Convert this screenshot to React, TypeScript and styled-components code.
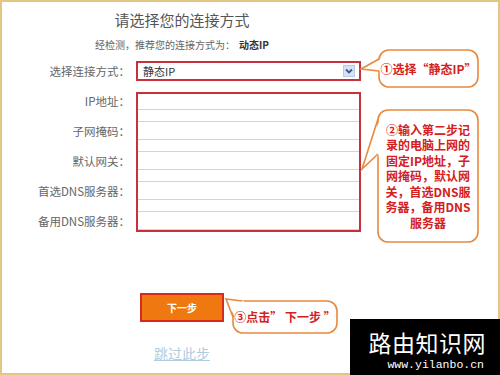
import React from 'react';
import styled, { createGlobalStyle } from 'styled-components';

const GlobalStyle = createGlobalStyle`
  html, body {
    margin: 0;
    padding: 0;
    background: #fff;
  }
  body {
    font-family: "Noto Sans CJK SC", "Noto Sans", sans-serif;
  }
`;

const Page = styled.div`
  position: relative;
  width: 500px;
  height: 375px;
  overflow: hidden;
`;

const Frame = styled.div`
  box-sizing: border-box;
  width: 500px;
  height: 375px;
  border: 2px solid #e4c585;
`;

const Content = styled.div`
  width: 360px;
  display: flex;
  flex-direction: column;
`;

const Title = styled.h1`
  margin: 8px 0 0;
  font-size: 15px;
  line-height: 20px;
  font-weight: normal;
  color: #555;
  text-align: center;
`;

const Hint = styled.p`
  margin: 8px 0 0;
  font-size: 10px;
  line-height: 14px;
  color: #666;
  text-align: center;

  b {
    color: #333;
    margin-left: 4px;
  }
`;

const SelectRow = styled.div`
  margin-top: 9px;
  display: flex;
  align-items: center;
  gap: 6px;
  height: 20px;
`;

const Label = styled.div<{ $h: number }>`
  width: 128px;
  font-size: 11.5px;
  line-height: ${p => p.$h}px;
  height: ${p => p.$h}px;
  color: #666;
  text-align: right;
  white-space: nowrap;
  flex: none;
`;

const Select = styled.div`
  position: relative;
  box-sizing: border-box;
  width: 225px;
  height: 20px;
  border: 2px solid #c8303a;
  padding-left: 5px;
  font-size: 11px;
  line-height: 16px;
  color: #333;
`;

const Arrow = styled.svg`
  position: absolute;
  right: 4px;
  top: 2px;
`;

const FieldsRow = styled.div`
  margin-top: 11px;
  display: flex;
  align-items: flex-start;
  gap: 6px;
  height: 140px;
`;

const Labels = styled.div`
  display: flex;
  flex-direction: column;
  margin-top: -6px;
  height: 140px;
`;

const Group = styled.div`
  width: 221px;
  height: 136px;
  border: 2px solid #c8303a;
  overflow: hidden;
  display: flex;
  flex-direction: column;
  gap: 11px;
`;

const Input = styled.div<{ $first?: boolean }>`
  box-sizing: border-box;
  height: 19px;
  flex: none;
  border-top: 1px solid #d4d4d4;
  border-bottom: 1px solid #d4d4d4;
  margin-top: ${p => (p.$first ? '-3px' : '0')};
`;

const NextButton = styled.div`
  align-self: center;
  margin-top: 61px;
  box-sizing: border-box;
  width: 84px;
  height: 29px;
  background: #f07810;
  border: 2px solid #d9281c;
  color: #fff;
  font-size: 10px;
  font-weight: bold;
  line-height: 25px;
  text-align: center;
`;

const SkipLink = styled.a`
  align-self: center;
  margin-top: 22px;
  font-size: 14px;
  line-height: 18px;
  color: #b0cde0;
  text-decoration: underline;
`;

const Bubble = styled.div<{ $x: number; $y: number; $w: number; $h: number }>`
  position: absolute;
  left: ${p => p.$x}px;
  top: ${p => p.$y}px;
  width: ${p => p.$w}px;
  height: ${p => p.$h}px;
  display: flex;
  align-items: center;
  justify-content: center;
`;

const BubbleShape = styled.svg`
  position: absolute;
  left: 0;
  top: 0;
  overflow: visible;
`;

const BubbleText = styled.div`
  position: relative;
  color: #d42020;
  font-size: 12px;
  font-weight: bold;
  line-height: 15.5px;
  text-align: center;
  white-space: nowrap;
`;

const Watermark = styled.div`
  position: absolute;
  right: 0;
  bottom: 0;
  width: 150px;
  height: 56px;
  background: #000;
  color: #fff;
  display: flex;
  flex-direction: column;
  align-items: flex-end;
  padding-right: 14px;
  box-sizing: border-box;
`;

const WmTitle = styled.div`
  font-size: 23px;
  line-height: 28px;
  margin-top: 9px;
  letter-spacing: 0.5px;
`;

const WmUrl = styled.div`
  font-family: "Liberation Mono", monospace;
  font-size: 11.5px;
  line-height: 14px;
  margin-top: 2px;
  padding-right: 2px;
`;

type Pt = [number, number];

function Callout({ x, y, w, h, tail, children }: {
  x: number; y: number; w: number; h: number; tail: [Pt, Pt, Pt]; children: React.ReactNode;
}) {
  const [a, tip, b] = tail;
  const stroke = '#e8893e';
  return (
    <Bubble $x={x} $y={y} $w={w} $h={h}>
      <BubbleShape width={w} height={h}>
        <rect x={0} y={0} width={w} height={h} rx={10} fill="#fff" stroke={stroke} strokeWidth={1.6} />
        <polygon points={`${a[0] + 2},${a[1]} ${tip[0]},${tip[1]} ${b[0] + 2},${b[1]}`} fill="#fff" />
        <polyline points={`${a[0]},${a[1]} ${tip[0]},${tip[1]} ${b[0]},${b[1]}`} fill="none" stroke={stroke} strokeWidth={1.6} strokeLinejoin="miter" />
      </BubbleShape>
      <BubbleText>{children}</BubbleText>
    </Bubble>
  );
}

const fields = ['IP地址：', '子网掩码：', '默认网关：', '首选DNS服务器：', '备用DNS服务器：'];

export default function App() {
  return (
    <>
      <GlobalStyle />
      <Page>
        <Frame>
          <Content>
            <Title>请选择您的连接方式</Title>
            <Hint>
              经检测，推荐您的连接方式为：<b>动态IP</b>
            </Hint>
            <SelectRow>
              <Label $h={20}>选择连接方式：</Label>
              <Select>
                静态IP
                <Arrow width="12" height="12" viewBox="0 0 12 12">
                  <rect x="0.5" y="0.5" width="11" height="11" fill="#d6e3f4" stroke="#b9cbe4" />
                  <polyline points="3,4.5 6,7.5 9,4.5" fill="none" stroke="#3b5a8c" strokeWidth="1.8" />
                </Arrow>
              </Select>
            </SelectRow>
            <FieldsRow>
              <Labels>
                {fields.map(f => (
                  <Label key={f} $h={30}>{f}</Label>
                ))}
              </Labels>
              <Group>
                {fields.map((f, i) => (
                  <Input key={f} $first={i === 0} />
                ))}
              </Group>
            </FieldsRow>
            <NextButton>下一步</NextButton>
            <SkipLink>跳过此步</SkipLink>
          </Content>
        </Frame>

        <Callout x={379} y={50} w={99} h={37} tail={[[0, 9], [-18, 19], [0, 21]]}>
          ①选择“静态IP”
        </Callout>
        <Callout x={378} y={110} w={100} h={132} tail={[[0, 9], [-16, 59], [0, 44]]}>
          ②输入第二步记<br />
          录的电脑上网的<br />
          固定IP地址，子<br />
          网掩码，默认网<br />
          关，首选DNS服<br />
          务器，备用DNS<br />
          服务器
        </Callout>
        <Callout x={233} y={301} w={104} h={32} tail={[[9, 0], [-7, -2], [0, 16]]}>
          ③点击” 下一步 ”
        </Callout>

        <Watermark>
          <WmTitle>路由知识网</WmTitle>
          <WmUrl>www.yilanbo.cn</WmUrl>
        </Watermark>
      </Page>
    </>
  );
}
